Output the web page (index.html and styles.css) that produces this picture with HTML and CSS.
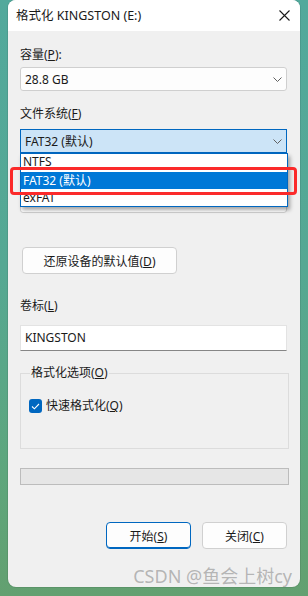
FILE: index.html
```html
<!DOCTYPE html>
<html>
<head>
<meta charset="utf-8">
<link rel="stylesheet" href="styles.css">
</head>
<body>
<div class="desktop">
  <div class="window">
    <div class="titlebar">
      <span class="title">格式化 KINGSTON (E:)</span>
      <svg class="close" width="11" height="11" viewBox="0 0 11 11"><path d="M0.5 0.5 L10.5 10.5 M10.5 0.5 L0.5 10.5" stroke="#1a1a1a" stroke-width="1.1" fill="none"/></svg>
    </div>
    <div class="body">
      <div class="label l1">容量(<u>P</u>):</div>
      <div class="combo c1">
        <span>28.8 GB</span>
        <svg class="chev" width="9" height="5" viewBox="0 0 9 5"><path d="M0.5 0.5 L4.5 4.5 L8.5 0.5" stroke="#606060" fill="none"/></svg>
      </div>
      <div class="label l2">文件系统(<u>F</u>)</div>
      <div class="fs-wrap">
        <div class="combo focused">
          <span>FAT32 (默认)</span>
          <svg class="chev" width="9" height="5" viewBox="0 0 9 5"><path d="M0.5 0.5 L4.5 4.5 L8.5 0.5" stroke="#606060" fill="none"/></svg>
        </div>
        <div class="hidden-combo"></div>
        <div class="dropdown">
          <div class="opt first">NTFS</div>
          <div class="opt sel">FAT32 (默认)</div>
          <div class="opt">exFAT</div>
        </div>
        <div class="redbox"></div>
      </div>
      <button class="btn restore">还原设备的默认值(<u>D</u>)</button>
      <div class="label l3">卷标(<u>L</u>)</div>
      <div class="input">KINGSTON</div>
      <div class="group">
        <span class="legend">格式化选项(<u>O</u>)</span>
        <div class="check">
          <span class="box"><svg width="9" height="7" viewBox="0 0 9 7"><path d="M1 3.5 L3.4 5.8 L8 1" stroke="#fff" stroke-width="1.1" fill="none"/></svg></span>
          <span>快速格式化(<u>Q</u>)</span>
        </div>
      </div>
      <div class="progress"></div>
      <div class="actions">
        <button class="btn default">开始(<u>S</u>)</button>
        <button class="btn">关闭(<u>C</u>)</button>
      </div>
    </div>
    <div class="watermark">CSDN @鱼会上树cy</div>
  </div>
</div>
</body>
</html>
```
FILE: styles.css
```css
* { box-sizing: border-box; }
html, body { margin: 0; padding: 0; }
body {
  width: 308px;
  height: 596px;
  overflow: hidden;
  background: linear-gradient(180deg, #52a99c 0%, #55a893 45%, #5ea67c 80%, #63a070 100%);
  font-family: "Noto Sans", "Noto Sans CJK SC", sans-serif;
  font-size: 12px;
  color: #1a1a1a;
}
.desktop { padding-left: 8px; }
.window {
  position: relative;
  width: 292px;
  height: 587px;
  background: #f0f0f0;
  border-radius: 8px;
  overflow: hidden;
  box-shadow: 0 0 0 1px rgba(0,0,0,0.08);
}
.titlebar {
  height: 31px;
  background: #ffffff;
  display: flex;
  align-items: center;
  justify-content: space-between;
  padding: 0 10px 0 8px;
}
.title { font-size: 12.5px; line-height: 16px; color: #1a1a1a; }
.close { display: block; }
.body { padding: 0 13px 0 12px; }
u { text-decoration: underline; text-underline-offset: 1px; }
.label { line-height: 16px; height: 16px; }
.l1 { margin-top: 16px; }
.c1 { margin-top: 4px; }
.l2 { margin-top: 15px; }
.fs-wrap { position: relative; height: 84px; margin-top: 7px; }
.l3 { margin-top: 24px; }

.combo {
  height: 24px;
  background: #fdfdfd;
  border: 1px solid #cfcfcf;
  border-radius: 3px;
  display: flex;
  align-items: center;
  justify-content: space-between;
  padding: 0 4px;
}
.chev { display: block; }
.focused {
  background: #cce4f7;
  border-color: #0067c0;
  border-radius: 0;
}
.hidden-combo {
  margin-top: 36px;
  height: 24px;
  background: #fff;
  border: 1px solid #cfcfcf;
  border-radius: 3px;
}
.dropdown {
  position: absolute;
  left: 0;
  top: 24px;
  width: 268px;
  height: 54px;
  background: #ffffff;
  border: 1px solid #0067c0;
  padding-top: 1px;
  box-shadow: 2px 3px 4px rgba(0,0,0,0.35);
}
.opt { height: 17px; line-height: 17px; padding-left: 2px; }
.opt.first { line-height: 13px; }
.opt.sel { background: #0078d7; color: #ffffff; }
.redbox {
  position: absolute;
  left: -10px;
  top: 38px;
  width: 287px;
  height: 28px;
  border: 3px solid #fb2a2a;
  border-radius: 4px;
}
.btn {
  font-family: inherit;
  font-size: 12px;
  color: #1a1a1a;
  background: #fdfdfd;
  border: 1px solid #d0d0d0;
  border-radius: 4px;
  height: 27px;
  padding: 0;
}
.restore { display: block; width: 155px; margin-top: 34px; margin-left: 2px; }
.input {
  margin-top: 11px;
  height: 26px;
  background: #ffffff;
  border: 1px solid #e3e3e3;
  border-bottom: 1px solid #868686;
  padding: 0 4px;
  line-height: 24px;
}
.group {
  margin-top: 22px;
  height: 76px;
  width: 269px;
  border: 1px solid #dcdcdc;
  padding: 0 8px;
}
.legend {
  display: inline-block;
  margin-top: -9px;
  margin-left: 1px;
  padding: 0 1px;
  line-height: 16px;
  background: #f0f0f0;
  vertical-align: top;
}
.check { display: flex; align-items: center; gap: 4px; margin-top: 7px; line-height: 16px; }
.box {
  width: 13px;
  height: 14px;
  background: #0067c0;
  border-radius: 3px;
  display: flex;
  align-items: center;
  justify-content: center;
}
.progress {
  margin-top: 19px;
  height: 17px;
  width: 269px;
  background: #e6e6e6;
  border: 1px solid #bcbcbc;
}
.actions {
  display: flex;
  justify-content: flex-end;
  gap: 11px;
  margin-top: 37px;
}
.actions .btn { width: 85px; }
.actions .default { border: 1px solid #0067c0; box-shadow: inset 0 -1px 0 #0067c0; }
.watermark {
  position: absolute;
  right: 8px;
  bottom: 0;
  font-size: 18px;
  line-height: 22px;
  color: rgba(130,130,130,0.55);
}
```
